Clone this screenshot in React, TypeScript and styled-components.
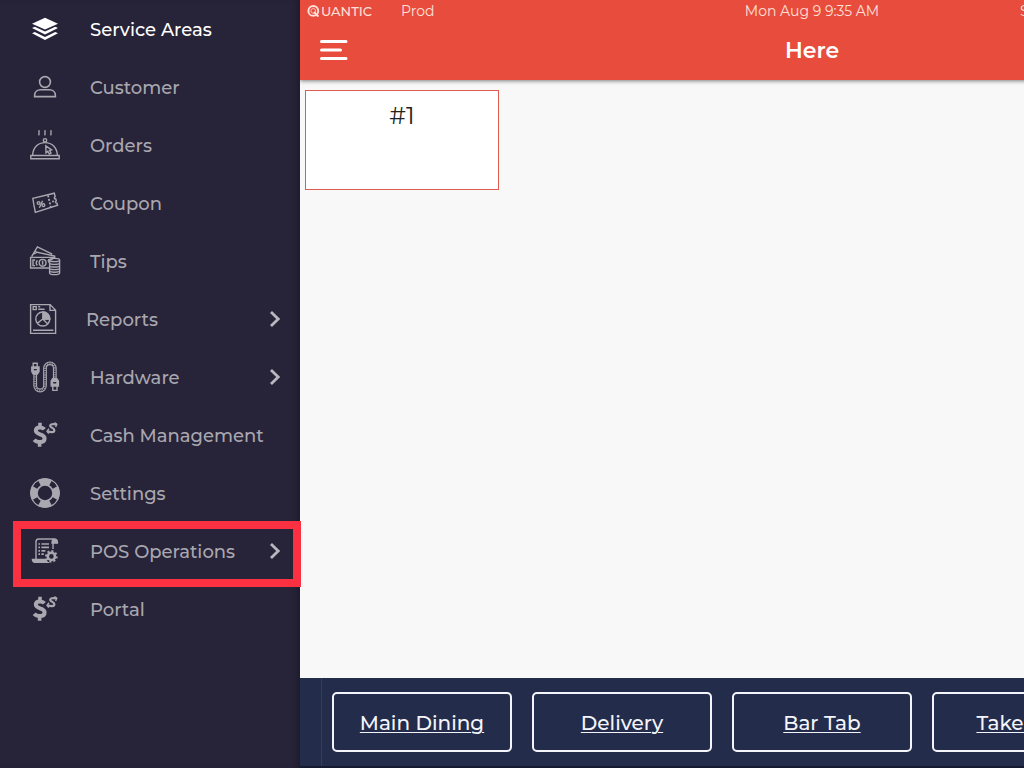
import React from "react";
import styled, { createGlobalStyle } from "styled-components";

const GlobalStyle = createGlobalStyle`
  * { box-sizing: border-box; }
  body {
    margin: 0;
    background: #272338;
    font-family: Montserrat, Inter, "Liberation Sans", sans-serif;
  }
  button { font-family: inherit; }
`;

const Shell = styled.div`
  display: flex;
  min-height: 100vh;
  overflow: hidden;
`;

const Sidebar = styled.nav`
  flex: 0 0 300px;
  position: relative;
  z-index: 1;
  background: #272338;
  box-shadow: inset -6px 0 6px -4px #1d1a2b;
`;

const Menu = styled.ul`
  list-style: none;
  margin: 0;
  padding: 0;
`;

const MenuEntry = styled.li`
  position: relative;
`;

const MenuButton = styled.button<{ $active?: boolean; $tight?: boolean }>`
  display: flex;
  align-items: center;
  gap: ${(p) => (p.$tight ? 24 : 28)}px;
  width: 100%;
  height: 58px;
  padding: 0 18px 0 28px;
  border: 0;
  background: none;
  color: ${(p) => (p.$active ? "#ffffff" : "#a9a7b0")};
  font-size: 18px;
  line-height: 24px;
  font-weight: 500;
  text-align: left;
  white-space: nowrap;
  cursor: pointer;
`;

const MenuLabel = styled.span`
  flex: 1;
  padding-top: 2px;
`;

const Highlight = styled.div`
  position: absolute;
  top: -1px;
  left: 13px;
  right: -1px;
  height: 66px;
  border: 8px solid #fb3040;
  pointer-events: none;
`;

const Panel = styled.div`
  flex: 0 0 100vw;
  display: flex;
  flex-direction: column;
  background: #f8f8f8;
`;

const Header = styled.header`
  height: 80px;
  background: #e84c3d;
  color: #ffffff;
  box-shadow: 0 1px 4px rgba(0, 0, 0, 0.5);
`;

const StatusBar = styled.div`
  display: grid;
  grid-template-columns: 1fr 416px 1fr;
  align-items: center;
  height: 22px;
  padding: 0 7px;
  font-size: 14px;
  line-height: 20px;
  color: #fde0d9;
`;

const StatusGroup = styled.div`
  display: flex;
  align-items: center;
  gap: 29px;
`;

const Brand = styled.span`
  display: flex;
  align-items: center;
  gap: 1px;
  font-size: 13px;
  font-weight: 500;
`;

const Clock = styled.time`
  text-align: center;
`;

const TitleBar = styled.div`
  display: grid;
  grid-template-columns: 48px 1fr 48px;
  align-items: center;
  height: 56px;
  padding: 0 20px;
`;

const IconButton = styled.button`
  display: flex;
  padding: 0;
  border: 0;
  background: none;
  color: inherit;
  cursor: pointer;
`;

const Title = styled.h1`
  margin: 0;
  padding-top: 2px;
  font-size: 22px;
  line-height: 28px;
  font-weight: 600;
  text-align: center;
`;

const Floor = styled.main`
  flex: 1;
  display: flex;
  flex-wrap: wrap;
  align-content: flex-start;
  gap: 10px;
  padding: 10px 5px;
`;

const TableCard = styled.button`
  display: flex;
  justify-content: center;
  align-items: flex-start;
  width: 194px;
  height: 100px;
  padding: 10px;
  border: 1px solid #df5b4f;
  background: #ffffff;
  color: #222222;
  font-size: 24px;
  line-height: 30px;
  font-weight: 400;
  cursor: pointer;
`;

const AreaBar = styled.footer`
  display: flex;
  height: 90px;
  padding-left: 21px;
  background: #242c4c;
  border-bottom: 2px solid #161a30;
`;

const AreaList = styled.div`
  display: flex;
  align-items: center;
  gap: 20px;
  padding-left: 10px;
  border-left: 1px solid #363e5c;
`;

const AreaButton = styled.button`
  width: 180px;
  height: 60px;
  padding: 2px 0 0;
  border: 2px solid #f4f5fa;
  border-radius: 5px;
  background: none;
  color: #f4f5fa;
  font-size: 20px;
  line-height: 26px;
  font-weight: 500;
  text-decoration: underline;
  text-decoration-thickness: 1px;
  text-underline-offset: 2px;
  cursor: pointer;
`;

const Glyph = styled.svg`
  flex: none;
  display: block;
`;

function MenuIcon({ children }: { children: React.ReactNode }) {
  return (
    <Glyph
      width="34"
      height="34"
      viewBox="0 0 34 34"
      fill="none"
      stroke="currentColor"
      strokeWidth="1.4"
      aria-hidden="true"
    >
      {children}
    </Glyph>
  );
}

const LayersIcon = () => (
  <MenuIcon>
    <g fill="currentColor" stroke="none">
      <path d="M17 5.7 30 11.7 17 17.6 4 11.7Z" />
      <path d="M4 16 6.8 14.7 17 19.6 27.2 14.7 30 16 17 22.4Z" />
      <path d="M4 21.2 6.8 19.9 17 25 27.2 19.9 30 21.2 17 28Z" />
    </g>
  </MenuIcon>
);

const CustomerIcon = () => (
  <MenuIcon>
    <circle cx="17" cy="12" r="5.4" strokeWidth="1.6" />
    <path d="M6.6 26.6v-1.2c0-3.4 2.6-5.6 6-5.6h8.8c3.4 0 6 2.2 6 5.6v1.2Z" strokeWidth="1.6" />
  </MenuIcon>
);

const OrdersIcon = () => (
  <MenuIcon>
    <path d="M2.8 27.5h28.4v3.2H2.8ZM4.6 27.4C5 19.6 10 14.6 17 14.6s12 5 12.4 12.8" />
    <circle cx="17" cy="12.3" r="1.7" />
    <path d="M11.4 2.2c-1.4 1.8.6 3.2-.8 5.2M17.4 2.2c-1.4 1.8.6 3.2-.8 5.2M23.4 2.2c-1.4 1.8.6 3.2-.8 5.2" />
    <path d="m17.8 17.8.2 7 1.8-1.4 1.6 2.6 1.6-1-1.4-2.4 2-.8Z" />
  </MenuIcon>
);

const CouponIcon = () => (
  <MenuIcon>
    <path d="M4.8 12.4 26.3 7.2l.9 3.3c-1.5.6-1.1 2.6.6 2.5l.5 1.8c-1.4.8-.8 2.5.7 2.4l.6 2L7.3 26.4l-.8-4.6-.7-3.4Z" />
    <circle cx="10.6" cy="17" r="1.4" />
    <circle cx="15.4" cy="19.2" r="1.4" />
    <path d="m14.6 14.8-3.2 7" />
    <path d="m20 9.4 3 12.4" strokeWidth="1.8" strokeDasharray="2 1.6" />
    <path d="M24.2 15.6 26 15.2" strokeWidth="1.6" />
  </MenuIcon>
);

const TipsIcon = () => (
  <MenuIcon>
    <path d="M21 24H2.6V13.4h24.6" />
    <path d="M3.6 12.6 9.4 2.8l14.8 7.4M6.4 7.2l2 .8M5.4 10l3.8-1.8L26.6 12v2" />
    <path d="M7 16H5v5.6h2M20 15.6h4.6" />
    <circle cx="14.6" cy="18.8" r="3.4" />
    <path d="M14.6 16.8v4M9.4 16.4c-1.6 1.4-1.6 3.6 0 5M19.8 16.2c.8.8 1.2 1.6 1.2 2.6" />
    <ellipse cx="26.6" cy="16" rx="5" ry="1.6" />
    <path d="M21.6 16v13c0 2.2 10 2.2 10 0V16M21.6 18.8c0 2.1 10 2.1 10 0M21.6 21.4c0 2.1 10 2.1 10 0M21.6 24c0 2.1 10 2.1 10 0M21.6 26.6c0 2.1 10 2.1 10 0" />
  </MenuIcon>
);

const ReportsIcon = () => (
  <MenuIcon>
    <path d="M2.6 2.6h19.6l5.4 5.6v23.2h-25ZM22 2.6v5.8h5.6" />
    <path d="M5.2 4.6h3v3h-3ZM10.2 4.8h2M10.2 7.2h6.4M5 28.2h20.4" />
    <circle cx="14.8" cy="17" r="7" />
    <path d="M14.8 17V10a7 7 0 0 1 7 7Z" fill="currentColor" />
    <path d="M14.8 17 9.2 21.4M14.8 17h7M14.8 17l5 5" />
  </MenuIcon>
);

const HardwareIcon = () => (
  <MenuIcon>
    <path d="M7.2 14v11.6a4.9 4.9 0 0 0 9.8 0V8.2a4.9 4.9 0 0 1 9.8 0V19" strokeWidth="3.8" />
    <path d="M7.2 14v11.6a4.9 4.9 0 0 0 9.8 0V8.2a4.9 4.9 0 0 1 9.8 0V19" stroke="#272338" strokeWidth="1.6" />
    <path d="M7.2 14v11.6a4.9 4.9 0 0 0 9.8 0V8.2a4.9 4.9 0 0 1 9.8 0V19" strokeWidth="2" strokeDasharray=".7 1.1" />
    <path d="M5.2 7V3.2h4V7" />
    <path d="M3.8 7H11v4.6L9.4 14H5.2l-1.4-2.4ZM23.2 26v-5l1.4-2.4h4.2l1.6 2.4v5Z" fill="currentColor" />
    <path d="M24.8 26v4.4H29V26" />
    <path d="M5.8 9.6h3M25.2 22.8h3" stroke="#272338" />
  </MenuIcon>
);

const CashIcon = () => (
  <MenuIcon>
    <path d="M16.4 11.2c-1-1.2-2.6-1.8-4.4-1.8-2.6 0-4.2 1.2-4.2 3.2 0 4.7 8.8 2.7 8.8 7.8 0 2.3-2 3.6-4.8 3.6-2.4 0-4.4-.8-5.6-2.2" strokeWidth="4" />
    <path d="M12 4.8v4.6M11.6 24v4.8" strokeWidth="3.6" />
    <path d="M28.4 6.4c-3.6-.8-6.4-.2-6.2 1.8.2 1.8 4.4 1.6 4.2 4.2-.2 2.2-3.4 2-6.8 1" strokeWidth="2.2" />
    <path d="m26.4 4.6 2.4 1.6-1.2 2.8M21 10.8l-2 2.4 1.8 2.4" strokeWidth="1.4" />
  </MenuIcon>
);

const SettingsIcon = () => (
  <MenuIcon>
    <circle cx="17" cy="17" r="11" strokeWidth="7.6" />
    <circle
      cx="17"
      cy="17"
      r="11.4"
      stroke="#272338"
      strokeWidth="5"
      pathLength="80"
      strokeDasharray="7 13"
      strokeDashoffset="-6.5"
    />
    <circle cx="17" cy="17" r="14.4" strokeWidth="1" />
  </MenuIcon>
);

const OperationsIcon = () => (
  <MenuIcon>
    <path d="M8 25V8c0-2 1-3 2.6-3H26c2.4 0 3.4 1.4 3.4 3.6H25M25 8.6V15" />
    <path d="M25 5.4c-1 1-1 2-1 3.6h5.4c0-2.4-1.4-4-4.4-3.6Z" fill="currentColor" />
    <path d="M4.4 25.4h13.4c.2 1.4.8 2.4 1.8 3H8c-2.4 0-3.6-1-3.6-3Z" fill="currentColor" />
    <path d="M10.4 10h1.6M13.4 10H21M10.4 13.4h1.6M13.4 13.4H21M10.4 16.8h1.6M13.4 16.8h4M10.4 20.2h1.6M13.4 20.2h2.4" strokeWidth="1.7" />
    <circle cx="23.4" cy="22.4" r="3.6" strokeWidth="2.6" />
    <circle cx="23.4" cy="22.4" r="5.4" strokeWidth="1.8" pathLength="64" strokeDasharray="4 4" />
  </MenuIcon>
);

const Chevron = () => (
  <Glyph width="14" height="18" viewBox="0 0 14 18" fill="none" stroke="#b9b8c0" strokeWidth="2.8" aria-hidden="true">
    <path d="m3 2 7.2 7L3 16" />
  </Glyph>
);

const BrandMark = () => (
  <Glyph width="13" height="13" viewBox="0 0 13 13" fill="none" stroke="currentColor" aria-hidden="true">
    <circle cx="6.3" cy="5.9" r="4.9" strokeWidth="2" />
    <circle cx="6.3" cy="5.9" r="2.4" strokeWidth=".8" />
    <path d="m7 7 4.4 4.6" strokeWidth="2" />
  </Glyph>
);

const HamburgerIcon = () => (
  <Glyph width="28" height="22" viewBox="0 0 28 22" stroke="currentColor" strokeWidth="3" strokeLinecap="round" aria-hidden="true">
    <path d="M1.5 2.5h24.5M1.5 11h19M1.5 19.5h24.5" />
  </Glyph>
);

interface MenuItem {
  label: string;
  icon: React.ComponentType;
  active?: boolean;
  tight?: boolean;
  expandable?: boolean;
  highlighted?: boolean;
}

const items: MenuItem[] = [
  { label: "Service Areas", icon: LayersIcon, active: true },
  { label: "Customer", icon: CustomerIcon },
  { label: "Orders", icon: OrdersIcon },
  { label: "Coupon", icon: CouponIcon },
  { label: "Tips", icon: TipsIcon },
  { label: "Reports", icon: ReportsIcon, tight: true, expandable: true },
  { label: "Hardware", icon: HardwareIcon, expandable: true },
  { label: "Cash Management", icon: CashIcon },
  { label: "Settings", icon: SettingsIcon },
  { label: "POS Operations", icon: OperationsIcon, expandable: true, highlighted: true },
  { label: "Portal", icon: CashIcon },
];

const areas = ["Main Dining", "Delivery", "Bar Tab", "Take Out"];

export default function App() {
  return (
    <>
      <GlobalStyle />
      <Shell>
        <Sidebar aria-label="Main menu">
          <Menu>
            {items.map(({ label, icon: Icon, active, tight, expandable, highlighted }) => (
              <MenuEntry key={label}>
                <MenuButton type="button" $active={active} $tight={tight}>
                  <Icon />
                  <MenuLabel>{label}</MenuLabel>
                  {expandable && <Chevron />}
                </MenuButton>
                {highlighted && <Highlight />}
              </MenuEntry>
            ))}
          </Menu>
        </Sidebar>
        <Panel>
          <Header>
            <StatusBar>
              <StatusGroup>
                <Brand>
                  <BrandMark />
                  UANTIC
                </Brand>
                <span>Prod</span>
              </StatusGroup>
              <Clock>Mon Aug 9 9:35 AM</Clock>
              <StatusGroup>S</StatusGroup>
            </StatusBar>
            <TitleBar>
              <IconButton type="button" aria-label="Toggle menu">
                <HamburgerIcon />
              </IconButton>
              <Title>Here</Title>
            </TitleBar>
          </Header>
          <Floor>
            <TableCard type="button">#1</TableCard>
          </Floor>
          <AreaBar>
            <AreaList>
              {areas.map((area) => (
                <AreaButton key={area} type="button">
                  {area}
                </AreaButton>
              ))}
            </AreaList>
          </AreaBar>
        </Panel>
      </Shell>
    </>
  );
}
